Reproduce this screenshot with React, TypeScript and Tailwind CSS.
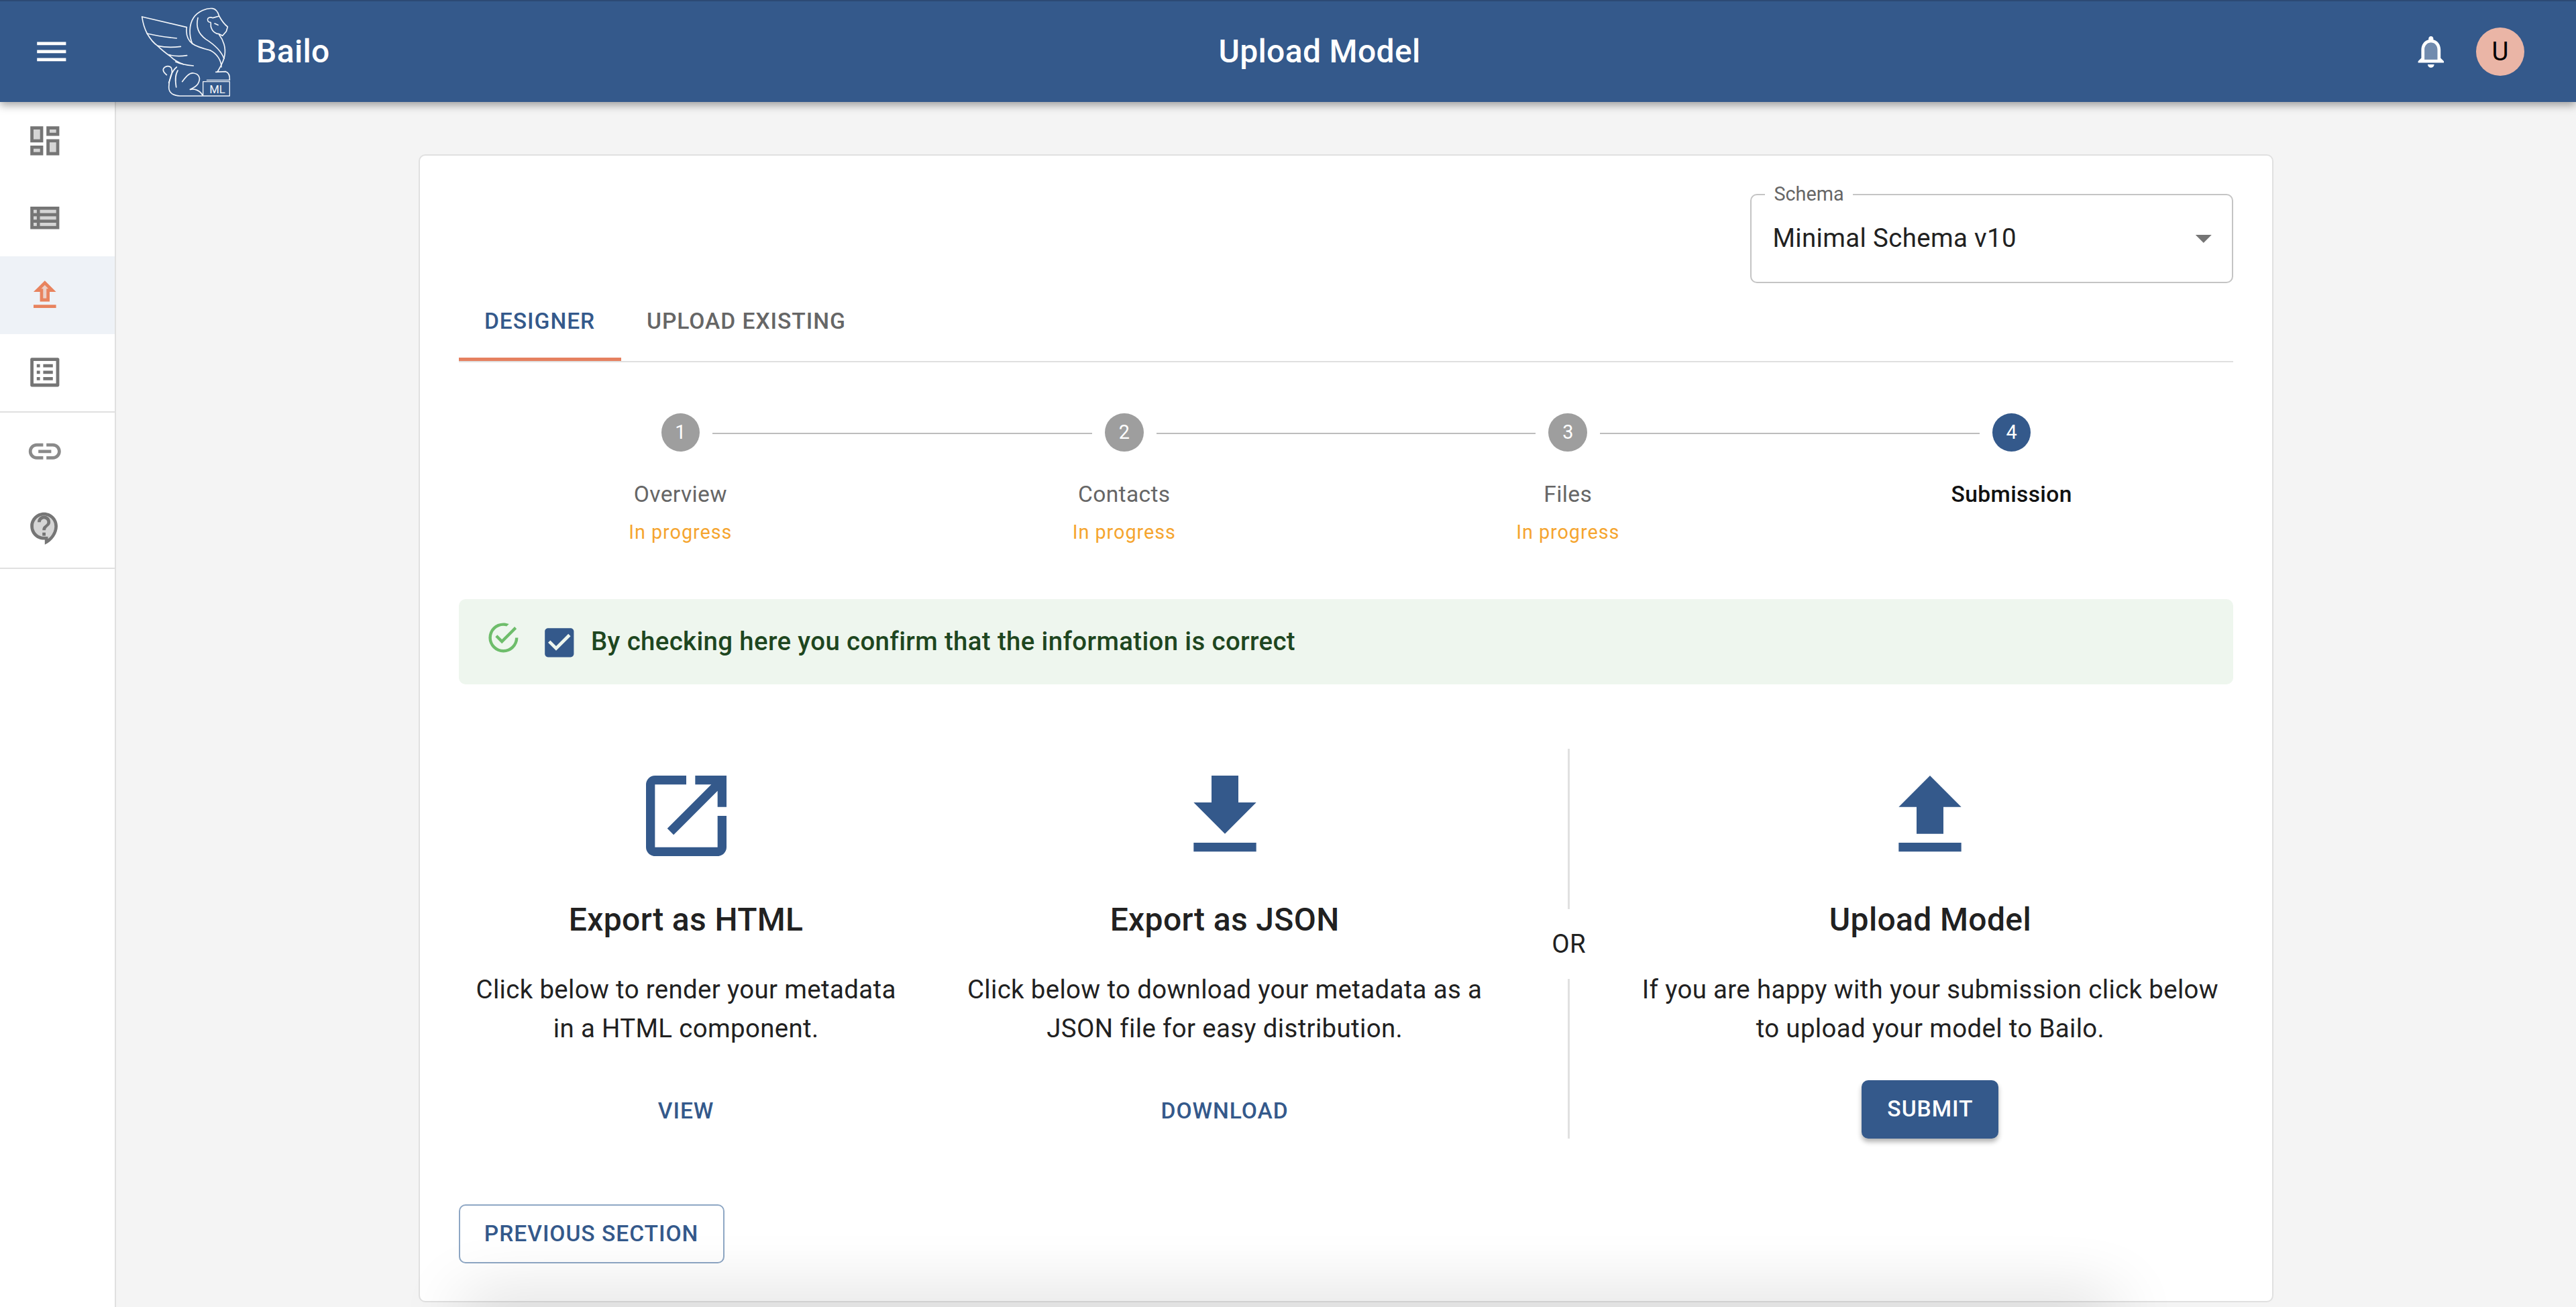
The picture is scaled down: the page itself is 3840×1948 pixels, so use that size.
import React from "react"

const sans = "font-['Roboto',sans-serif]"

function Icon({ size = 57.6, className = "", children }: { size?: number; className?: string; children: React.ReactNode }) {
  return (
    <svg viewBox="0 0 24 24" width={size} height={size} fill="currentColor" className={`shrink-0 ${className}`}>
      {children}
    </svg>
  )
}

function Logo() {
  return (
    <svg viewBox="90 0 402 405" width={134} height={135} fill="none" stroke="#f2f5f9" strokeWidth={5} strokeLinecap="round" strokeLinejoin="round" className="shrink-0">
      <path d="M95 45L295 92C290 130 300 150 320 165C340 180 380 190 400 195" />
      <path d="M95 45C100 80 110 105 118 120C135 150 150 165 165 175C185 195 205 210 222 222C240 240 260 250 280 257" />
      <path d="M118 120C160 130 210 137 250 141M165 175C200 183 240 182 268 178M215 215C240 222 270 222 296 218M245 246C270 258 300 262 325 264" />
      <path d="M320 165C305 130 305 80 325 50C345 20 385 5 410 8C425 10 435 25 440 42" />
      <path d="M345 50C335 90 345 120 380 145C420 170 450 200 462 232" />
      <path d="M440 42C450 60 465 80 478 90L472 110L455 130L440 122C425 122 410 110 405 95C400 85 405 75 402 70C390 70 385 60 390 52C395 47 405 47 412 50L440 42M420 75L435 82" />
      <path d="M440 125C460 150 470 185 465 215C462 245 445 270 432 292H425L470 290C485 295 488 310 487 328" />
      <path d="M400 195C430 210 450 240 450 270" />
      <path d="M385 328H487M368 335H487V399H368Z" strokeWidth={4} />
      <path d="M250 270C225 290 215 330 215 360C215 385 235 398 265 399H365" />
      <path d="M215 340C225 310 235 290 225 272C215 262 195 265 190 280C188 292 198 298 205 305" />
      <path d="M255 285C240 310 245 340 248 360" />
      <path d="M275 335C290 315 305 295 325 297C350 300 360 320 345 345C335 360 320 365 310 370C330 365 355 375 365 395" />
      <text x="432" y="386" textAnchor="middle" fontSize="50" fill="#f2f5f9" stroke="none" fontFamily="Roboto, sans-serif">ML</text>
    </svg>
  )
}

const navRows = [
  {
    key: "dashboard",
    icon: (
      <>
        <path opacity=".3" d="M5 5h4v6H5zm10 8h4v6h-4zM5 17h4v2H5zM15 5h4v2h-4z" />
        <path d="M3 13h8V3H3v10zm2-8h4v6H5V5zm8 16h8V11h-8v10zm2-8h4v6h-4v-6zM13 3v6h8V3h-8zm6 4h-4V5h4v2zM3 21h8v-6H3v6zm2-4h4v2H5v-2z" />
      </>
    ),
  },
  {
    key: "list",
    icon: (
      <>
        <path opacity=".3" d="M5 7h2v2H5zm0 4h2v2H5zm0 4h2v2H5zm4-8h10v2H9zm0 4h10v2H9zm0 4h10v2H9z" />
        <path d="M3 5v14h18V5H3zm4 12H5v-2h2v2zm0-4H5v-2h2v2zm0-4H5V7h2v2zm12 8H9v-2h10v2zm0-4H9v-2h10v2zm0-4H9V7h10v2z" />
      </>
    ),
  },
  {
    key: "upload",
    active: true,
    icon: (
      <>
        <path opacity=".3" d="M9.83 8H11v6h2V8h1.17L12 5.83z" />
        <path d="M12 3 5 10h4v6h6v-6h4l-7-7zm1 5v6h-2V8H9.83L12 5.83 14.17 8H13zM5 18h14v2H5z" />
      </>
    ),
  },
  {
    key: "marketplace",
    icon: (
      <path d="M19 5v14H5V5h14m1.1-2H3.9c-.5 0-.9.4-.9.9v16.2c0 .4.4.9.9.9h16.2c.4 0 .9-.5.9-.9V3.9c0-.5-.5-.9-.9-.9zM11 7h6v2h-6V7zm0 4h6v2h-6v-2zm0 4h6v2h-6zM7 7h2v2H7zm0 4h2v2H7zm0 4h2v2H7z" />
    ),
    divider: true,
  },
  {
    key: "link",
    light: true,
    icon: (
      <path d="M17 7h-4v2h4c1.65 0 3 1.35 3 3s-1.35 3-3 3h-4v2h4c2.76 0 5-2.24 5-5s-2.24-5-5-5zm-6 8H7c-1.65 0-3-1.35-3-3s1.35-3 3-3h4V7H7c-2.76 0-5 2.24-5 5s2.24 5 5 5h4v-2zm-3-4h8v2H8z" />
    ),
  },
  {
    key: "help",
    icon: (
      <>
        <path opacity=".3" d="M11.5 4C7.92 4 5 6.92 5 10.5S7.92 17 11.5 17H14v1.3c2.43-1.84 4-4.84 4-7.8C18 6.92 15.08 4 11.5 4z" />
        <path fillRule="evenodd" d="M11.5 2C6.81 2 3 5.81 3 10.5S6.81 19 11.5 19h.5v3c4.86-2.34 8-7 8-11.5C20 5.81 16.19 2 11.5 2zM11.5 4C7.92 4 5 6.92 5 10.5S7.92 17 11.5 17H14v1.3c2.43-1.84 4-4.84 4-7.8C18 6.92 15.08 4 11.5 4z" />
        <path d="M10.5 14.5h2v2h-2zM12.5 13h-2c0-3.25 3-3 3-5 0-1.1-.9-2-2-2s-2 .9-2 2h-2c0-2.21 1.79-4 4-4s4 1.79 4 4c0 2.5-3 2.75-3 5z" />
      </>
    ),
    divider: true,
  },
]

const steps = [
  { n: 1, label: "Overview", hint: "In progress" },
  { n: 2, label: "Contacts", hint: "In progress" },
  { n: 3, label: "Files", hint: "In progress" },
  { n: 4, label: "Submission", current: true },
]

function Sidebar() {
  return (
    <aside className="w-[173px] shrink-0 bg-white border-r-[2.4px] border-[#e0e0e0]">
      {navRows.map((row) => (
        <React.Fragment key={row.key}>
          <div className={`h-[115.2px] pl-[38.4px] flex items-center ${row.active ? "bg-[#eef2f7] text-[#e8835e]" : row.light ? "text-[#8a8a8a]" : "text-[#757575]"}`}>
            <Icon>{row.icon}</Icon>
          </div>
          {row.divider && <div className="h-[2.4px] bg-[#e0e0e0]" />}
        </React.Fragment>
      ))}
    </aside>
  )
}

function Stepper() {
  return (
    <div className="grid grid-cols-4 mt-[76px]">
      {steps.map((s, i) => (
        <div key={s.n} className="relative flex flex-col items-center">
          {i > 0 && <div className="absolute top-[29px] left-[calc(-50%+48px)] right-[calc(50%+48px)] h-[2.4px] bg-[#bdbdbd]" />}
          <div className={`w-[57.6px] h-[57.6px] rounded-full flex items-center justify-center text-white text-[28.8px] ${s.current ? "bg-[#34598b]" : "bg-[#9e9e9e]"}`}>
            {s.n}
          </div>
          <div className={`mt-[44px] text-[33.6px] leading-[40px] tracking-[0.36px] ${s.current ? "font-medium text-[#111]" : "text-[#666]"}`}>{s.label}</div>
          {s.hint && <div className="mt-[16px] text-[28.8px] leading-[40px] tracking-[0.96px] text-[#f5a52f]">{s.hint}</div>}
        </div>
      ))}
    </div>
  )
}

function ActionColumn({ icon, title, lines }: { icon: React.ReactNode; title: string; lines: string[] }) {
  return (
    <>
      <div className="mt-[20px] h-[160px] text-[#34598b]">
        <Icon size={160}>{icon}</Icon>
      </div>
      <h2 className="mt-[47px] text-[48px] leading-[56px] font-medium tracking-[0.36px] text-[#212121]">{title}</h2>
      <p className="mt-[47px] text-[38.4px] leading-[58px] tracking-[0.36px] text-[#212121] text-center">
        {lines[0]}
        <br />
        {lines[1]}
      </p>
    </>
  )
}

function TextButton({ children }: { children: React.ReactNode }) {
  return <div className="mt-[74px] text-[33.6px] leading-[40px] font-medium tracking-[0.96px] text-[#34598b]">{children}</div>
}

export default function App() {
  return (
    <div className={`h-screen overflow-hidden flex flex-col bg-[#f4f4f4] ${sans}`}>
      <header className="relative z-10 h-[152px] shrink-0 flex items-center bg-[#34598b] border-t-[2px] border-[#2c4a74] text-white shadow-[0_5px_12px_rgba(0,0,0,0.35)]">
        <div className="absolute left-[48px]">
          <Icon>
            <path d="M3 18h18v-2H3v2zm0-5h18v-2H3v2zm0-7v2h18V6H3z" />
          </Icon>
        </div>
        <div className="ml-[210px] flex items-center">
          <Logo />
          <span className="ml-[38px] text-[48px] font-medium tracking-[0.36px]">Bailo</span>
        </div>
        <div className="absolute left-[94px] right-0 text-center text-[48px] font-medium tracking-[0.36px]">Upload Model</div>
        <div className="ml-auto mr-[77px] flex items-center gap-[38px]">
          <Icon>
            <path opacity=".3" d="M12 6.5c-2.49 0-4 2.02-4 4.5v6h8v-6c0-2.48-1.51-4.5-4-4.5z" />
            <path d="M12 22c1.1 0 2-.9 2-2h-4c0 1.1.9 2 2 2zm6-6v-5c0-3.07-1.63-5.64-4.5-6.32V4c0-.83-.67-1.5-1.5-1.5s-1.5.67-1.5 1.5v.68C7.64 5.36 6 7.92 6 11v5l-2 2v1h16v-1l-2-2zm-2 1H8v-6c0-2.48 1.51-4.5 4-4.5s4 2.02 4 4.5v6z" />
          </Icon>
          <div className="w-[72px] h-[72px] rounded-full bg-[#eab5a6] flex items-center justify-center text-[38.4px] text-black">U</div>
        </div>
      </header>

      <div className="flex flex-1 min-h-0">
        <Sidebar />

        <main className="flex-1 min-w-0 pt-[78px]">
          <div className="relative w-[2765px] h-[1711px] mx-auto px-[57.6px] pt-[56.6px] bg-white border-[2.4px] border-[#e0e0e0] rounded-[10px]">
            <div className="flex justify-end">
              <div className="relative w-[720px] h-[133px] border-[2.4px] border-[#c4c4c4] rounded-[10px] flex items-center pl-[31px] text-[38.4px] tracking-[0.36px] text-[#212121]">
                <span className="absolute left-[20px] top-[-19px] px-[13px] bg-white text-[28.8px] leading-[34px] tracking-normal text-[#666]">Schema</span>
                Minimal Schema v10
                <Icon className="absolute right-[14px] text-[#757575]">
                  <path d="M7 10l5 5 5-5z" />
                </Icon>
              </div>
            </div>

            <div className="flex h-[118px] border-b-[2.4px] border-[#e0e0e0] text-[33.6px] font-medium tracking-[0.96px]">
              <div className="relative h-[116px] px-[38.4px] flex items-center text-[#34598b]">
                DESIGNER
                <div className="absolute inset-x-0 bottom-0 h-[5px] bg-[#e5805f]" />
              </div>
              <div className="h-[116px] px-[38.4px] flex items-center text-[#666]">UPLOAD EXISTING</div>
            </div>

            <Stepper />

            <div className="mt-[80px] h-[127px] pl-[40px] flex items-start bg-[#eef6ee] rounded-[10px] text-[#1e4620]">
              <Icon size={52.8} className="mt-[31px] text-[#6ebd6b]">
                <path d="M20,12A8,8 0 0,1 12,20A8,8 0 0,1 4,12A8,8 0 0,1 12,4C12.76,4 13.5,4.11 14.2,4.31L15.77,2.74C14.61,2.26 13.34,2 12,2A10,10 0 0,0 2,12A10,10 0 0,0 12,22A10,10 0 0,0 22,12M7.91,10.08L6.5,11.5L11,16L21,6L19.59,4.58L11,13.17L7.91,10.08Z" />
              </Icon>
              <Icon className="ml-[29px] mt-[36px] text-[#34598b]">
                <path d="M19 3H5c-1.11 0-2 .9-2 2v14c0 1.1.89 2 2 2h14c1.1 0 2-.9 2-2V5c0-1.1-.89-2-2-2zm-9 14l-5-5 1.41-1.41L10 14.17l7.59-7.59L19 8l-9 9z" />
              </Icon>
              <span className="ml-[18px] mt-[35px] text-[38.4px] leading-[56px] font-medium tracking-[0.36px]">By checking here you confirm that the information is correct</span>
            </div>

            <div className="mt-[96px] flex h-[581px]">
              <div className="w-[678px] flex flex-col items-center">
                <ActionColumn
                  title="Export as HTML"
                  lines={["Click below to render your metadata", "in a HTML component."]}
                  icon={<path d="M19 19H5V5h7V3H5c-1.11 0-2 .9-2 2v14c0 1.1.89 2 2 2h14c1.1 0 2-.9 2-2v-7h-2v7zM14 3v2h3.59l-9.83 9.83 1.41 1.41L19 6.41V10h2V3h-7z" />}
                />
                <TextButton>VIEW</TextButton>
              </div>
              <div className="w-[928px] flex flex-col items-center">
                <ActionColumn
                  title="Export as JSON"
                  lines={["Click below to download your metadata as a", "JSON file for easy distribution."]}
                  icon={<path d="M5 20h14v-2H5v2zM19 9h-4V3H9v6H5l7 7 7-7z" />}
                />
                <TextButton>DOWNLOAD</TextButton>
              </div>
              <div className="w-[98px] flex flex-col items-center">
                <div className="w-[2.4px] h-[239px] bg-[#e0e0e0]" />
                <div className="flex-1 flex items-center text-[38.4px] tracking-[0.36px] text-[#212121]">OR</div>
                <div className="w-[2.4px] h-[238px] bg-[#e0e0e0]" />
              </div>
              <div className="ml-auto w-[904px] flex flex-col items-center">
                <ActionColumn
                  title="Upload Model"
                  lines={["If you are happy with your submission click below", "to upload your model to Bailo."]}
                  icon={<path d="M9 16h6v-6h4l-7-7-7 7h4zm-4 2h14v2H5z" />}
                />
                <div className="mt-[48px] w-[204px] h-[87px] rounded-[10px] bg-[#34598b] flex items-center justify-center text-[33.6px] font-medium tracking-[0.96px] text-white shadow-[0_5px_7px_rgba(0,0,0,0.3)]">
                  SUBMIT
                </div>
              </div>
            </div>

            <div className="mt-[98px] w-[396px] h-[88px] border-[2.4px] border-[#8ea7c4] rounded-[10px] flex items-center justify-center text-[33.6px] font-medium tracking-[0.96px] text-[#34598b]">
              PREVIOUS SECTION
            </div>

            {/* soft shadow creeping up from the element under the fold */}
            <div className="absolute left-[75px] right-[245px] bottom-[-40px] h-[30px] shadow-[0_0_100px_10px_rgba(0,0,0,0.2)]" />
          </div>
        </main>
      </div>
    </div>
  )
}
